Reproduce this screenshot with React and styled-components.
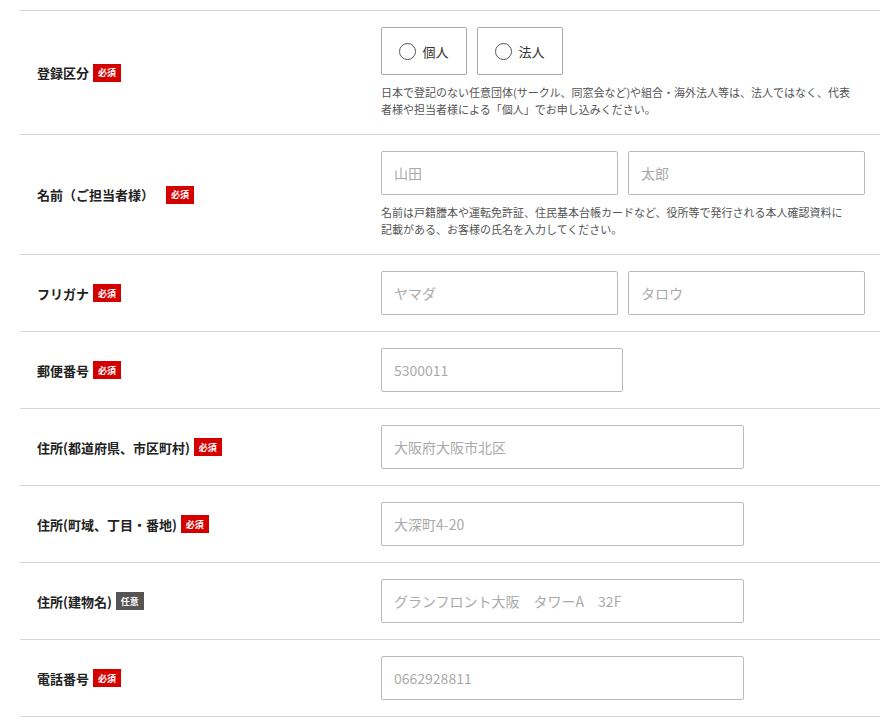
import React from "react";
import styled, { createGlobalStyle } from "styled-components";

const Global = createGlobalStyle`
  body { margin: 0; background: #fff; font-family: "Noto Sans CJK JP", "Noto Sans", sans-serif; color: #222; }
`;
const Form = styled.div`
  margin: 10px 10px 0 20px;
  border-top: 1px solid #d6d6d6;
`;
const Row = styled.div`
  display: grid;
  grid-template-columns: 361px 1fr;
  align-items: center;
  border-bottom: 1px solid #d6d6d6;
  padding: 16px 0;
  min-height: 44px;
`;
const Label = styled.div`
  padding-left: 17px;
  font-size: 13px;
  font-weight: bold;
  display: flex;
  align-items: center;
  gap: ${p => p.$gap || 4}px;
`;
const Badge = styled.span`
  display: inline-flex;
  align-items: center;
  justify-content: center;
  background: ${p => (p.$opt ? "#555" : "#d40000")};
  color: #fff;
  font-size: 9px;
  font-weight: bold;
  height: 18px;
  padding: 0 5px;
`;
const Field = styled.div`
  display: flex;
  flex-direction: column;
  gap: 9px;
`;
const Inputs = styled.div`
  display: flex;
  gap: 10px;
`;
const Input = styled.input`
  box-sizing: border-box;
  width: ${p => p.$w}px;
  height: 44px;
  border: 1px solid #bbb;
  border-radius: 2px;
  padding: 0 12px;
  font-size: 14px;
  font-family: inherit;
  &::placeholder { color: #aaa; }
`;
const Radio = styled.label`
  box-sizing: border-box;
  width: 86px;
  height: 48px;
  border: 1px solid #aaa;
  border-radius: 2px;
  display: flex;
  align-items: center;
  justify-content: center;
  gap: 6px;
  font-size: 13px;
  color: #333;
`;
const Circle = styled.span`
  width: 15px;
  height: 15px;
  border: 1px solid #555;
  border-radius: 50%;
`;
const Note = styled.p`
  margin: 0;
  font-size: 11px;
  line-height: 17px;
  color: #555;
  width: 472px;
`;

const Req = () => <Badge>必須</Badge>;

const simple = [
  ["郵便番号", "5300011", 242],
  ["住所(都道府県、市区町村)", "大阪府大阪市北区", 363],
  ["住所(町域、丁目・番地)", "大深町4-20", 363],
  ["住所(建物名)", "グランフロント大阪　タワーA　32F", 363, true],
  ["電話番号", "0662928811", 363],
];

export default function App() {
  return (
    <>
      <Global />
      <Form>
        <Row>
          <Label>登録区分<Req /></Label>
          <Field>
            <Inputs>
              <Radio><Circle />個人</Radio>
              <Radio><Circle />法人</Radio>
            </Inputs>
            <Note>日本で登記のない任意団体(サークル、同窓会など)や組合・海外法人等は、法人ではなく、代表者様や担当者様による「個人」でお申し込みください。</Note>
          </Field>
        </Row>
        <Row>
          <Label $gap={12}>名前（ご担当者様）<Req /></Label>
          <Field>
            <Inputs>
              <Input $w={237} placeholder="山田" />
              <Input $w={237} placeholder="太郎" />
            </Inputs>
            <Note>名前は戸籍謄本や運転免許証、住民基本台帳カードなど、役所等で発行される本人確認資料に記載がある、お客様の氏名を入力してください。</Note>
          </Field>
        </Row>
        <Row>
          <Label>フリガナ<Req /></Label>
          <Inputs>
            <Input $w={237} placeholder="ヤマダ" />
            <Input $w={237} placeholder="タロウ" />
          </Inputs>
        </Row>
        {simple.map(([l, ph, w, opt]) => (
          <Row key={l}>
            <Label>{l}{opt ? <Badge $opt>任意</Badge> : <Req />}</Label>
            <Inputs><Input $w={w} placeholder={ph} /></Inputs>
          </Row>
        ))}
      </Form>
    </>
  );
}
